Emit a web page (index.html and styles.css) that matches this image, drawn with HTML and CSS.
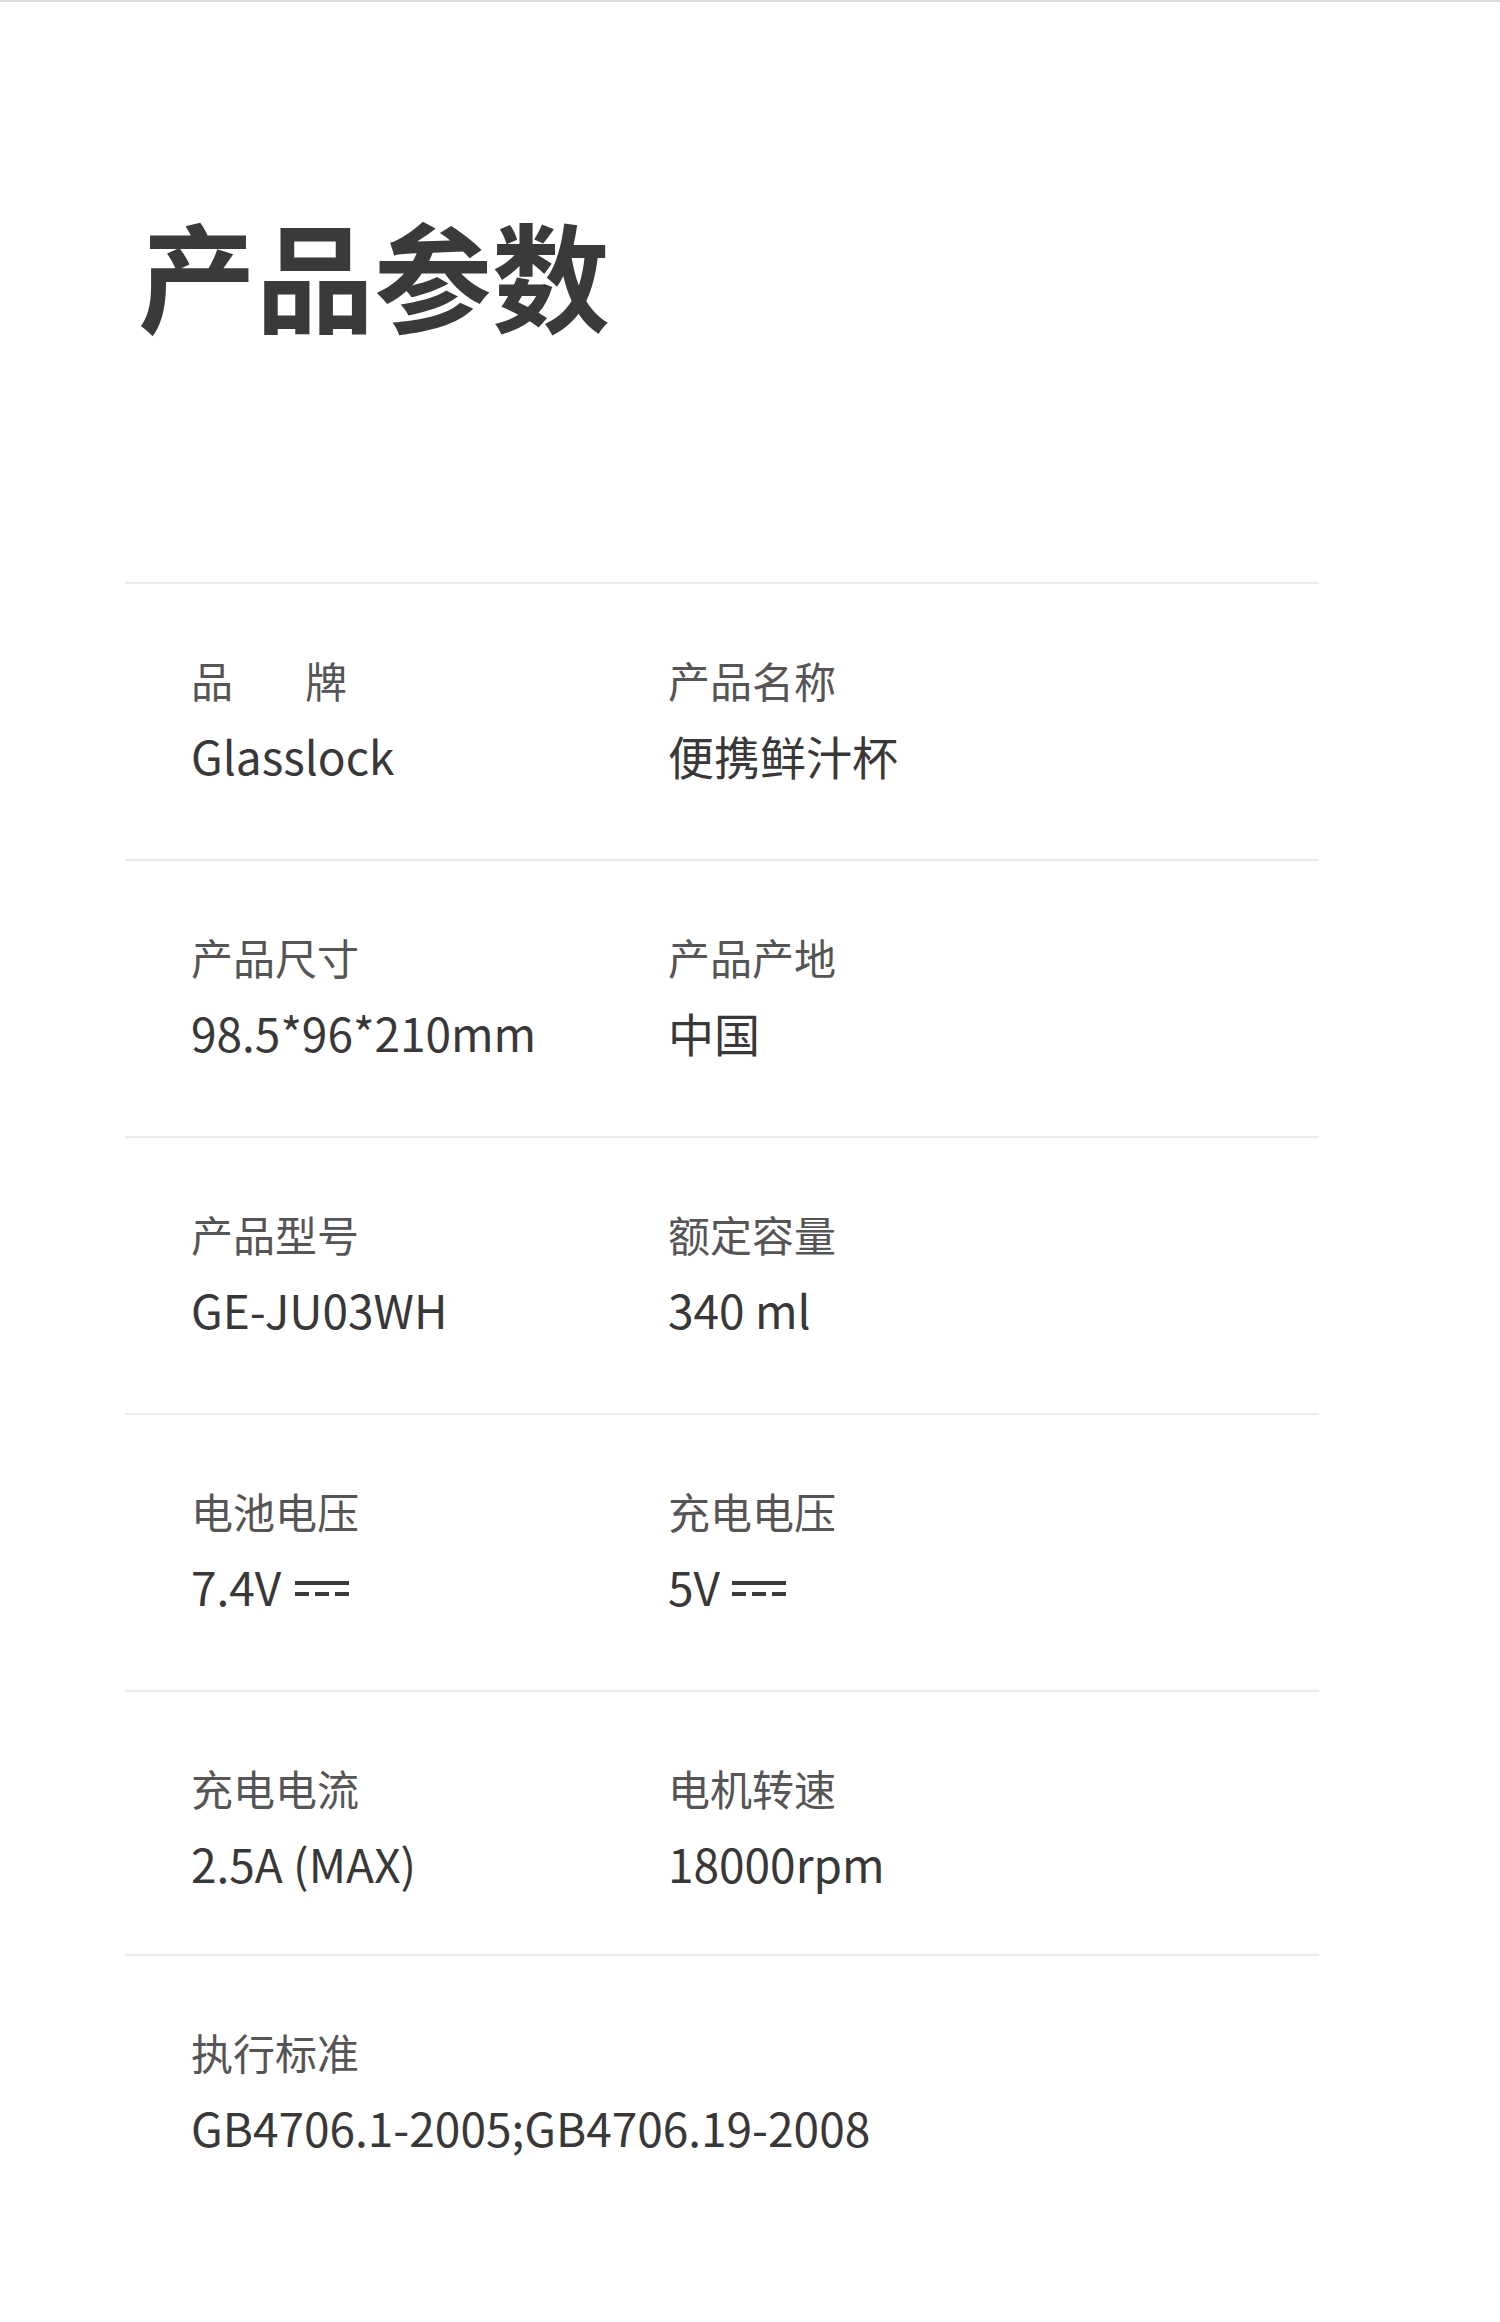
FILE: index.html
```html
<!DOCTYPE html>
<html lang="zh-CN">
<head>
<meta charset="utf-8">
<title>产品参数</title>
<link rel="stylesheet" href="styles.css">
</head>
<body>
<div class="page">
  <h1 class="title">产品参数</h1>
  <div class="specs">
    <div class="row">
      <div class="cell">
        <div class="label">品<span class="gap"></span>牌</div>
        <div class="value">Glasslock</div>
      </div>
      <div class="cell">
        <div class="label">产品名称</div>
        <div class="value">便携鲜汁杯</div>
      </div>
    </div>
    <div class="row">
      <div class="cell">
        <div class="label">产品尺寸</div>
        <div class="value">98.5*96*210mm</div>
      </div>
      <div class="cell">
        <div class="label">产品产地</div>
        <div class="value">中国</div>
      </div>
    </div>
    <div class="row">
      <div class="cell">
        <div class="label">产品型号</div>
        <div class="value">GE-JU03WH</div>
      </div>
      <div class="cell">
        <div class="label">额定容量</div>
        <div class="value">340 ml</div>
      </div>
    </div>
    <div class="row">
      <div class="cell">
        <div class="label">电池电压</div>
        <div class="value">7.4V <svg class="dc" width="54" height="16" viewBox="0 0 54 16"><rect x="0" y="0" width="54" height="4" fill="#3a3a3a"/><rect x="0" y="11" width="14" height="4" fill="#3a3a3a"/><rect x="20" y="11" width="14" height="4" fill="#3a3a3a"/><rect x="40" y="11" width="14" height="4" fill="#3a3a3a"/></svg></div>
      </div>
      <div class="cell">
        <div class="label">充电电压</div>
        <div class="value">5V<svg class="dc dc-tight" width="54" height="16" viewBox="0 0 54 16"><rect x="0" y="0" width="54" height="4" fill="#3a3a3a"/><rect x="0" y="11" width="14" height="4" fill="#3a3a3a"/><rect x="20" y="11" width="14" height="4" fill="#3a3a3a"/><rect x="40" y="11" width="14" height="4" fill="#3a3a3a"/></svg></div>
      </div>
    </div>
    <div class="row row-short">
      <div class="cell">
        <div class="label">充电电流</div>
        <div class="value">2.5A (MAX)</div>
      </div>
      <div class="cell">
        <div class="label">电机转速</div>
        <div class="value">18000rpm</div>
      </div>
    </div>
    <div class="row row-last">
      <div class="cell">
        <div class="label">执行标准</div>
        <div class="value">GB4706.1-2005;GB4706.19-2008</div>
      </div>
    </div>
  </div>
</div>
</body>
</html>
```

FILE: styles.css
```css
* {
  box-sizing: border-box;
}

html, body {
  margin: 0;
  padding: 0;
  background: #ffffff;
}

body {
  font-family: "Noto Sans CJK SC", "Noto Sans", sans-serif;
  width: 1500px;
  height: 2322px;
  overflow: hidden;
  border-top: 2px solid #dcdcdc;
}

.page {
  padding-top: 212px;
}

.title {
  margin: 0;
  padding-left: 138px;
  font-size: 118px;
  line-height: 1;
  font-weight: 700;
  color: #3a3a3a;
}

.specs {
  margin-top: 250px;
  margin-left: 125px;
  width: 1194px;
}

.row {
  display: grid;
  grid-template-columns: 477px 1fr;
  height: 277px;
  padding-top: 75px;
  padding-left: 66px;
  border-top: 2px solid #ebebeb;
}

.row-short {
  height: 264px;
}

.row-last {
  height: 320px;
}

.label {
  font-size: 42px;
  line-height: 1;
  color: #555555;
  font-weight: 400;
}

.gap {
  display: inline-block;
  width: 72px;
}

.value {
  margin-top: 31px;
  font-size: 46px;
  line-height: 1;
  color: #383838;
  white-space: nowrap;
}

.dc {
  vertical-align: 9px;
  margin-left: 3px;
}

.dc-tight {
  margin-left: 12px;
}
```
